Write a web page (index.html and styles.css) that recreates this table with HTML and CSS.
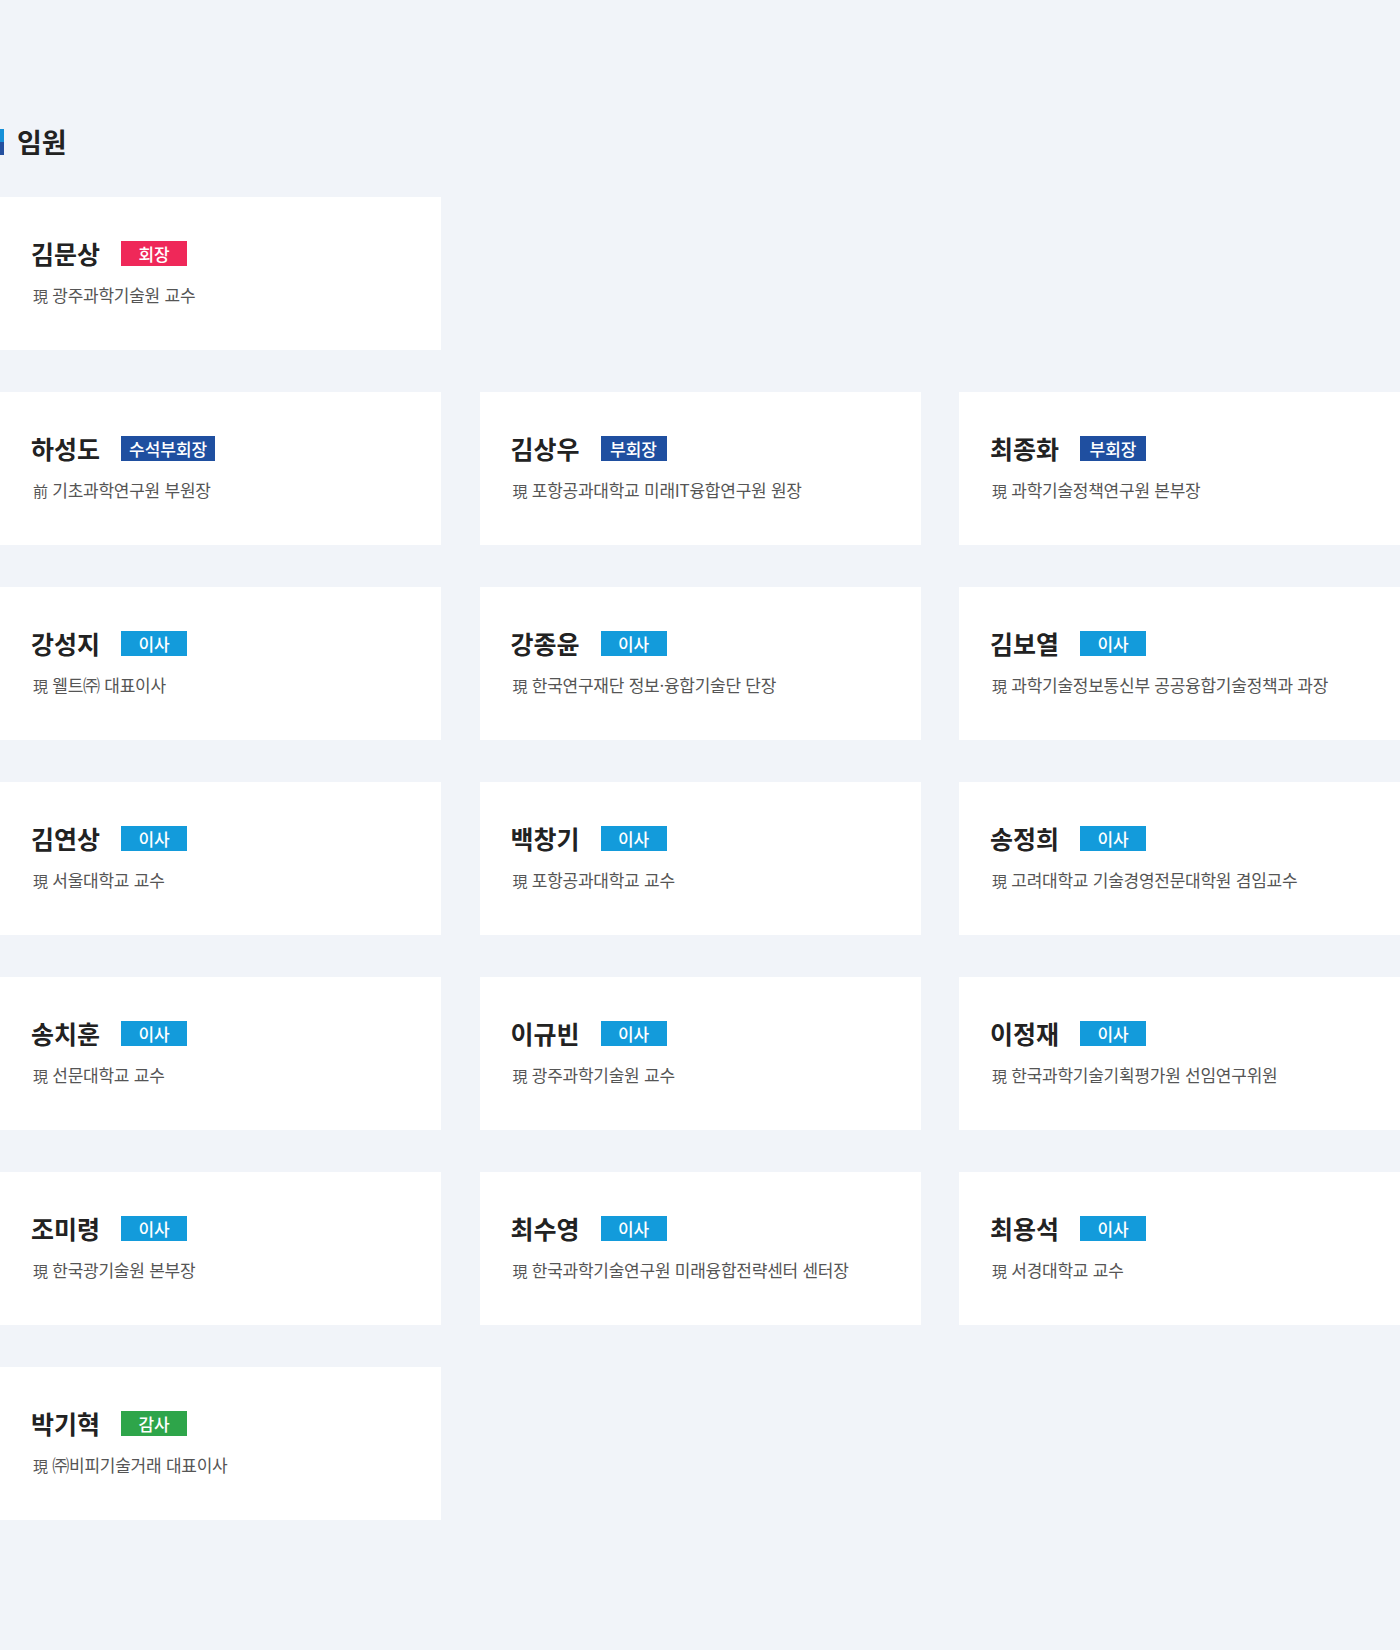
FILE: index.html
```html
<!DOCTYPE html>
<html lang="ko">
<head>
<meta charset="utf-8">
<title>임원</title>
<link rel="stylesheet" href="styles.css">
</head>
<body>
<main class="page">
  <h2 class="section-title">임원</h2>

  <div class="groups">
    <div class="grid">
      <div class="card">
        <div class="head"><span class="name">김문상</span><span class="badge badge-red">회장</span></div>
        <p class="desc"><span class="pre">現</span> 광주과학기술원 교수</p>
      </div>
    </div>

    <div class="grid">
      <div class="card">
        <div class="head"><span class="name">하성도</span><span class="badge badge-navy">수석부회장</span></div>
        <p class="desc"><span class="pre">前</span> 기초과학연구원 부원장</p>
      </div>
      <div class="card">
        <div class="head"><span class="name">김상우</span><span class="badge badge-navy">부회장</span></div>
        <p class="desc"><span class="pre">現</span> 포항공과대학교 미래IT융합연구원 원장</p>
      </div>
      <div class="card">
        <div class="head"><span class="name">최종화</span><span class="badge badge-navy">부회장</span></div>
        <p class="desc"><span class="pre">現</span> 과학기술정책연구원 본부장</p>
      </div>

      <div class="card">
        <div class="head"><span class="name">강성지</span><span class="badge badge-sky">이사</span></div>
        <p class="desc"><span class="pre">現</span> 웰트㈜ 대표이사</p>
      </div>
      <div class="card">
        <div class="head"><span class="name">강종윤</span><span class="badge badge-sky">이사</span></div>
        <p class="desc"><span class="pre">現</span> 한국연구재단 정보·융합기술단 단장</p>
      </div>
      <div class="card">
        <div class="head"><span class="name">김보열</span><span class="badge badge-sky">이사</span></div>
        <p class="desc"><span class="pre">現</span> 과학기술정보통신부 공공융합기술정책과 과장</p>
      </div>

      <div class="card">
        <div class="head"><span class="name">김연상</span><span class="badge badge-sky">이사</span></div>
        <p class="desc"><span class="pre">現</span> 서울대학교 교수</p>
      </div>
      <div class="card">
        <div class="head"><span class="name">백창기</span><span class="badge badge-sky">이사</span></div>
        <p class="desc"><span class="pre">現</span> 포항공과대학교 교수</p>
      </div>
      <div class="card">
        <div class="head"><span class="name">송정희</span><span class="badge badge-sky">이사</span></div>
        <p class="desc"><span class="pre">現</span> 고려대학교 기술경영전문대학원 겸임교수</p>
      </div>

      <div class="card">
        <div class="head"><span class="name">송치훈</span><span class="badge badge-sky">이사</span></div>
        <p class="desc"><span class="pre">現</span> 선문대학교 교수</p>
      </div>
      <div class="card">
        <div class="head"><span class="name">이규빈</span><span class="badge badge-sky">이사</span></div>
        <p class="desc"><span class="pre">現</span> 광주과학기술원 교수</p>
      </div>
      <div class="card">
        <div class="head"><span class="name">이정재</span><span class="badge badge-sky">이사</span></div>
        <p class="desc"><span class="pre">現</span> 한국과학기술기획평가원 선임연구위원</p>
      </div>

      <div class="card">
        <div class="head"><span class="name">조미령</span><span class="badge badge-sky">이사</span></div>
        <p class="desc"><span class="pre">現</span> 한국광기술원 본부장</p>
      </div>
      <div class="card">
        <div class="head"><span class="name">최수영</span><span class="badge badge-sky">이사</span></div>
        <p class="desc"><span class="pre">現</span> 한국과학기술연구원 미래융합전략센터 센터장</p>
      </div>
      <div class="card">
        <div class="head"><span class="name">최용석</span><span class="badge badge-sky">이사</span></div>
        <p class="desc"><span class="pre">現</span> 서경대학교 교수</p>
      </div>

      <div class="card">
        <div class="head"><span class="name">박기혁</span><span class="badge badge-green">감사</span></div>
        <p class="desc"><span class="pre">現</span> ㈜비피기술거래 대표이사</p>
      </div>
    </div>
  </div>
</main>
</body>
</html>
```

FILE: styles.css
```css
html, body {
  margin: 0;
  padding: 0;
  background: #f1f4f9;
}

body {
  font-family: "Noto Sans CJK KR", "Noto Sans", sans-serif;
  color: #222;
  min-height: 1650px;
}

.page {
  width: 1400px;
  padding: 129px 0 130px;
}

.section-title {
  margin: 0 0 42px;
  display: flex;
  align-items: center;
  gap: 13px;
  height: 26px;
  font-size: 27px;
  font-weight: 700;
  line-height: 26px;
  color: #222;
}

.section-title::before {
  content: "";
  display: block;
  width: 4px;
  height: 26px;
  background: linear-gradient(to bottom, #1690d8 0%, #1690d8 50%, #24509f 50%, #24509f 100%);
}

.groups {
  display: flex;
  flex-direction: column;
  gap: 42px;
}

.grid {
  display: grid;
  grid-template-columns: repeat(3, 441px);
  justify-content: space-between;
  row-gap: 42px;
}

.card {
  background: #fff;
  height: 153px;
  box-sizing: border-box;
  padding: 44px 31px 0;
}

.head {
  display: flex;
  align-items: center;
  gap: 21px;
  height: 25px;
}

.name {
  font-size: 25px;
  font-weight: 700;
  color: #222;
  line-height: 25px;
}

.badge {
  display: inline-flex;
  align-items: center;
  justify-content: center;
  min-width: 66px;
  height: 25px;
  box-sizing: border-box;
  padding: 0 8px 1px;
  font-size: 17px;
  font-weight: 500;
  color: #fff;
  line-height: 1;
}

.badge-red { background: #ef2859; }
.badge-navy { background: #1f4fa0; }
.badge-sky { background: #139bdb; }
.badge-green { background: #2ea54a; }

.desc {
  margin: 17px 0 0 2px;
  font-size: 17px;
  line-height: 24px;
  color: #555;
  letter-spacing: -0.25px;
}

.pre {
  font-size: 15px;
}
```
